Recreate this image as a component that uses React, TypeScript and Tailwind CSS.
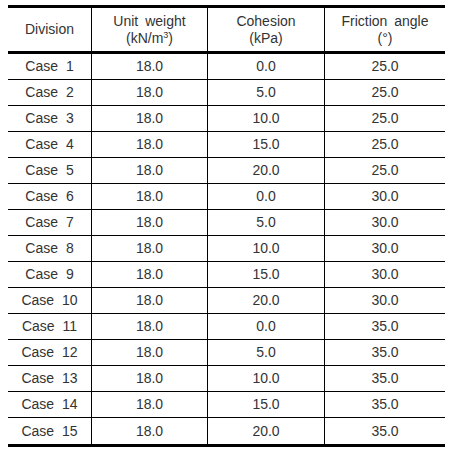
const rows = [
  ["Case 1", "18.0", "0.0", "25.0"],
  ["Case 2", "18.0", "5.0", "25.0"],
  ["Case 3", "18.0", "10.0", "25.0"],
  ["Case 4", "18.0", "15.0", "25.0"],
  ["Case 5", "18.0", "20.0", "25.0"],
  ["Case 6", "18.0", "0.0", "30.0"],
  ["Case 7", "18.0", "5.0", "30.0"],
  ["Case 8", "18.0", "10.0", "30.0"],
  ["Case 9", "18.0", "15.0", "30.0"],
  ["Case 10", "18.0", "20.0", "30.0"],
  ["Case 11", "18.0", "0.0", "35.0"],
  ["Case 12", "18.0", "5.0", "35.0"],
  ["Case 13", "18.0", "10.0", "35.0"],
  ["Case 14", "18.0", "15.0", "35.0"],
  ["Case 15", "18.0", "20.0", "35.0"],
];

const widths = ["w-[84px] border-r", "w-[116px] border-r", "w-[117px] border-r", "w-[120px]"];

export default function App() {
  return (
    <div className="min-h-screen bg-white pl-2 pt-[5px] font-['Liberation_Sans',Arial,sans-serif] text-[14px] text-[#333]">
      <div className="w-[437px] border-y-[3px] border-black">
        <div className="flex h-[46px] border-b-[3px] border-black leading-[17px]">
          <div className={`${widths[0]} flex items-center justify-center border-black`}>Division</div>
          <div className={`${widths[1]} flex flex-col items-center justify-center border-black`}>
            <span className="[word-spacing:3px]">Unit weight</span>
            <span>
              (kN/m<sup className="text-[9px]">3</sup>)
            </span>
          </div>
          <div className={`${widths[2]} flex flex-col items-center justify-center border-black`}>
            <span>Cohesion</span>
            <span>(kPa)</span>
          </div>
          <div className={`${widths[3]} flex flex-col items-center justify-center`}>
            <span className="[word-spacing:3px]">Friction angle</span>
            <span>(°)</span>
          </div>
        </div>
        {rows.map((r, i) => (
          <div
            key={r[0]}
            className={`flex h-[26px] ${i < rows.length - 1 ? "border-b border-black" : "h-[25px]"}`}
          >
            {r.map((c, j) => (
              <div
                key={j}
                className={`${widths[j]} flex items-center justify-center border-black ${j === 0 ? "[word-spacing:4px]" : ""}`}
              >
                {c}
              </div>
            ))}
          </div>
        ))}
      </div>
    </div>
  );
}
